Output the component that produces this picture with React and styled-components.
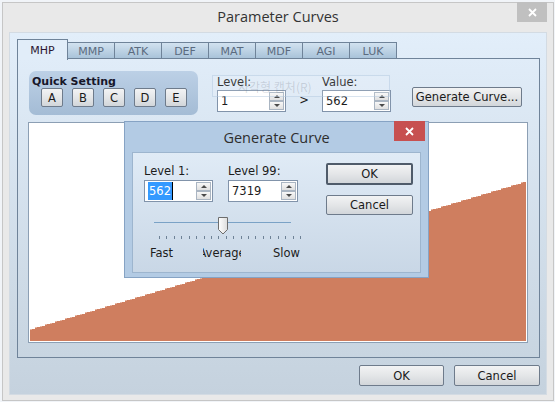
import React from "react";
import styled, { createGlobalStyle } from "styled-components";

const GlobalStyle = createGlobalStyle`
  html, body { margin: 0; padding: 0; }
  body {
    width: 555px;
    height: 402px;
    overflow: hidden;
    background: #f1f4f8;
    font-family: "DejaVu Sans", Verdana, sans-serif;
    font-size: 11.5px;
    color: #1c1c1c;
  }
`;

const Window = styled.div`
  position: relative;
  box-sizing: border-box;
  margin: 2px 0 0 2px;
  width: 552px;
  height: 399px;
  background: #e9e9e9;
  border: 1px solid #c6c6c6;
  padding: 0 6px 5px 6px;
  display: flex;
  flex-direction: column;
`;

const TitleBar = styled.div`
  height: 29px;
  display: grid;
  grid-template-columns: 1fr auto 1fr;
  align-items: start;
`;

const Title = styled.div`
  grid-column: 2;
  font-family: "Open Sans", "Noto Sans", sans-serif;
  font-size: 14.5px;
  line-height: 28px;
  color: #333;
`;

const CloseButton = styled.div`
  grid-column: 3;
  justify-self: end;
  width: ${(p) => p.$w}px;
  height: ${(p) => p.$h}px;
  margin-top: -1px;
  margin-right: ${(p) => p.$mr || 0}px;
  background: ${(p) => p.$bg};
  display: flex;
  align-items: center;
  justify-content: center;
`;

const Client = styled.div`
  flex: 1;
  display: flex;
  flex-direction: column;
  border: 1px solid #d3dbe3;
  background: linear-gradient(#e2eefa, #c5d2de);
  padding: 6px 6px 7px 7px;
`;

const TabRow = styled.div`
  height: 20px;
  display: flex;
  align-items: flex-end;
  position: relative;
  z-index: 1;
`;

const Tab = styled.div`
  box-sizing: border-box;
  width: ${(p) => (p.$active ? 51 : 48)}px;
  height: ${(p) => (p.$active ? 21 : 17)}px;
  margin-bottom: ${(p) => (p.$active ? -1 : 0)}px;
  margin-left: ${(p) => (p.$first ? 0 : -1)}px;
  border: 1px solid #6f8399;
  border-bottom: ${(p) => (p.$active ? "none" : "1px solid #6f8399")};
  background: ${(p) =>
    p.$active ? "#e1edf9" : "linear-gradient(#d2e2f0, #a9c3d9)"};
  color: ${(p) => (p.$active ? "#2a1532" : "#5b6b7f")};
  font-size: 11px;
  display: flex;
  align-items: center;
  justify-content: center;
  padding-top: ${(p) => (p.$active ? 1 : 2)}px;
  position: relative;
  z-index: ${(p) => (p.$active ? 2 : 1)};
`;

const Panel = styled.div`
  height: 300px;
  box-sizing: border-box;
  border: 1px solid #6f8399;
  margin-top: -1px;
  padding: 12px 11px 14px 10px;
  display: flex;
  flex-direction: column;
`;

const TopRow = styled.div`
  display: flex;
  align-items: flex-start;
  height: 44px;
`;

const QuickBox = styled.div`
  box-sizing: border-box;
  width: 169px;
  height: 44px;
  margin-left: 1px;
  border-radius: 7px;
  background: linear-gradient(#bcd0e6, #a4bcd5);
  padding: 4px 0 0 3px;
`;

const QuickLabel = styled.div`
  font-weight: bold;
  font-size: 11px;
  line-height: 13px;
  color: #16162a;
  height: 13px;
  overflow: hidden;
`;

const LetterRow = styled.div`
  display: flex;
  gap: 9px;
  padding-left: 9px;
`;

const Button = styled.button`
  box-sizing: border-box;
  width: ${(p) => p.$w}px;
  height: ${(p) => p.$h}px;
  margin: 0;
  padding: 0;
  font-family: inherit;
  font-size: 11.5px;
  color: #1a1a1a;
  background: linear-gradient(#f2f3f4, #e4e6e8 50%, #d2d6da);
  border: ${(p) => (p.$default ? "2px solid #4f5b6a" : "1px solid #6e7b8b")};
  border-radius: 2px;
  display: flex;
  align-items: center;
  justify-content: center;
  flex-shrink: 0;
`;

const Field = styled.div`
  display: flex;
  flex-direction: column;
  gap: ${(p) => p.$gap}px;
`;

const FieldLabel = styled.div`
  line-height: 14px;
  height: 14px;
`;

const SpinBox = styled.div`
  box-sizing: border-box;
  width: ${(p) => p.$w || 69}px;
  height: 22px;
  background: #fff;
  border: 1px solid #8193aa;
  padding: 0 1px 0 3px;
  display: flex;
  align-items: center;
`;

const SpinText = styled.div`
  flex: 1;
  display: flex;
  align-items: center;
  height: 18px;
`;

const Selected = styled.span`
  background: #3399ff;
  color: #fff;
  line-height: 18px;
  padding: 0 1px;
  border-right: 1px solid #000;
`;

const SpinArrows = styled.div`
  display: flex;
  flex-direction: column;
  width: 15px;
`;

const SpinArrow = styled.div`
  box-sizing: border-box;
  height: 9px;
  border: 1px solid #aab5c2;
  background: linear-gradient(#f7f7f7, #e0e0e0);
  display: flex;
  align-items: center;
  justify-content: center;
  &::after {
    content: "";
    border-left: 3px solid transparent;
    border-right: 3px solid transparent;
    ${(p) =>
      p.$down ? "border-top: 3px solid #4a4a4a;" : "border-bottom: 3px solid #4a4a4a;"}
  }
`;

const Gt = styled.div`
  width: 36px;
  text-align: center;
  margin-top: 22px;
  line-height: 14px;
`;

const Chart = styled.div`
  box-sizing: border-box;
  width: 500px;
  height: 221px;
  margin-top: 7px;
  border: 1px solid #8c9fb4;
  background: #fff;
  padding: 1px;
  display: flex;
`;

const BottomRow = styled.div`
  display: flex;
  justify-content: flex-end;
  gap: 10px;
  margin-top: 7px;
`;

const Ghost = styled.div`
  position: absolute;
  left: 209px;
  top: 72px;
  width: 178px;
  height: 22px;
  box-sizing: border-box;
  border: 1px solid rgba(170, 195, 220, 0.45);
  background: rgba(255, 255, 255, 0.12);
  display: flex;
  align-items: center;
  padding-left: 25px;
  font-family: "Noto Sans CJK KR", sans-serif;
  font-size: 12px;
  color: rgba(90, 100, 115, 0.22);
`;

const Dialog = styled.div`
  position: absolute;
  left: 121px;
  top: 118px;
  width: 305px;
  height: 157px;
  box-sizing: border-box;
  background: #b3cbe4;
  border: 1px solid #86a3c4;
  padding: 0 7px 4px 7px;
  display: flex;
  flex-direction: column;
  z-index: 5;
`;

const DialogTitleBar = styled(TitleBar)`
  height: 30px;
`;

const DialogTitle = styled(Title)`
  line-height: 31px;
  color: #2e2e2e;
`;

const DialogClient = styled.div`
  flex: 1;
  border: 1px solid #9db5ce;
  background: linear-gradient(#e0ebf6, #c9d7e6);
  padding: 10px 7px 0 11px;
  display: grid;
  grid-template-columns: 182px 87px;
`;

const LeftCol = styled.div`
  display: flex;
  flex-direction: column;
`;

const FieldRow = styled.div`
  display: flex;
  gap: 15px;
  padding-top: 1px;
`;

const SliderArt = styled.svg`
  display: block;
  margin: 12px 0 0 6px;
`;

const SliderLabels = styled.div`
  display: flex;
  margin: 6px 0 0 6px;
  line-height: 14px;
`;

const SliderLabel = styled.div`
  width: ${(p) => p.$w}px;
  margin-left: ${(p) => p.$ml || 0}px;
  display: flex;
  justify-content: ${(p) => (p.$center ? "center" : "flex-start")};
  overflow: hidden;
  white-space: nowrap;
  flex-shrink: 0;
`;

const RightCol = styled.div`
  display: flex;
  flex-direction: column;
  gap: 10px;
`;

const XMark = ({ size = 9 }) => (
  <svg width={size} height={size} viewBox="0 0 9 9">
    <path d="M1 1 L8 8 M8 1 L1 8" stroke="#fff" strokeWidth="1.8" />
  </svg>
);

const Spinner = ({ value, selected, w }) => (
  <SpinBox $w={w}>
    <SpinText>{selected ? <Selected>{value}</Selected> : value}</SpinText>
    <SpinArrows>
      <SpinArrow />
      <SpinArrow $down />
    </SpinArrows>
  </SpinBox>
);

const Curve = ({ from, to, max }) => {
  const W = 496;
  const H = 217;
  const n = 99;
  const step = W / n;
  let d = `M0 ${H}`;
  let tops = "";
  for (let i = 0; i < n; i++) {
    const v = from + ((to - from) * i) / (n - 1);
    const y = Math.round(H - (v / max) * H);
    const x0 = Math.round(i * step);
    const x1 = Math.round((i + 1) * step);
    d += ` L${x0} ${y} L${x1} ${y}`;
    tops += `M${x0} ${y + 0.5} h2 `;
  }
  d += ` L${W} ${H} Z`;
  return (
    <svg width={W} height={H} shapeRendering="crispEdges">
      <path d={d} fill="#cf7e5f" />
      <path d={tops} stroke="#e6b6a3" strokeWidth="1" fill="none" />
    </svg>
  );
};

const Slider = () => {
  const ticks = [];
  for (let i = 0; i < 20; i++) {
    const x = Math.round(9 + (i * 141) / 19) + 0.5;
    ticks.push(<line key={i} x1={x} y1="22" x2={x} y2="25" stroke="#6e8296" />);
  }
  return (
    <SliderArt width="152" height="26" viewBox="0 0 152 26">
      <defs>
        <linearGradient id="thumb" x1="0" y1="0" x2="1" y2="0">
          <stop offset="0" stopColor="#ffffff" />
          <stop offset="1" stopColor="#dcdcdc" />
        </linearGradient>
      </defs>
      <rect x="4" y="8" width="137" height="1" fill="#7aa2c6" />
      <path
        d="M68.5 3.5 h9 v12 l-4.5 4.5 l-4.5 -4.5 z"
        fill="url(#thumb)"
        stroke="#6d6d6d"
      />
      {ticks}
    </SliderArt>
  );
};

const tabs = ["MHP", "MMP", "ATK", "DEF", "MAT", "MDF", "AGI", "LUK"];

export default function App() {
  return (
    <>
      <GlobalStyle />
      <Window>
        <TitleBar>
          <Title>Parameter Curves</Title>
          <CloseButton $w={30} $h={20} $bg="#c0c0c0">
            <XMark />
          </CloseButton>
        </TitleBar>
        <Client>
          <TabRow>
            {tabs.map((t, i) => (
              <Tab key={t} $active={i === 0} $first={i === 0}>
                {t}
              </Tab>
            ))}
          </TabRow>
          <Panel>
            <TopRow>
              <QuickBox>
                <QuickLabel>Quick Setting</QuickLabel>
                <LetterRow>
                  {["A", "B", "C", "D", "E"].map((l) => (
                    <Button key={l} $w={22} $h={19}>
                      {l}
                    </Button>
                  ))}
                </LetterRow>
              </QuickBox>
              <Field $gap={1} style={{ marginLeft: 19, paddingTop: 4 }}>
                <FieldLabel>Level:</FieldLabel>
                <Spinner value="1" />
              </Field>
              <Gt>&gt;</Gt>
              <Field $gap={1} style={{ paddingTop: 4 }}>
                <FieldLabel>Value:</FieldLabel>
                <Spinner value="562" />
              </Field>
              <Button $w={110} $h={20} style={{ marginLeft: 21, marginTop: 16 }}>
                Generate Curve...
              </Button>
            </TopRow>
            <Chart>
              <Curve from={562} to={7319} max={9999} />
            </Chart>
          </Panel>
          <BottomRow>
            <Button $w={85} $h={21}>
              OK
            </Button>
            <Button $w={86} $h={21}>
              Cancel
            </Button>
          </BottomRow>
        </Client>

        <Ghost>사각형 캡처(R)</Ghost>

        <Dialog>
          <DialogTitleBar>
            <DialogTitle>Generate Curve</DialogTitle>
            <CloseButton $w={31} $h={20} $bg="#c75050" $mr={-4}>
              <XMark />
            </CloseButton>
          </DialogTitleBar>
          <DialogClient>
            <LeftCol>
              <FieldRow>
                <Field $gap={2}>
                  <FieldLabel>Level 1:</FieldLabel>
                  <Spinner value="562" selected />
                </Field>
                <Field $gap={2}>
                  <FieldLabel>Level 99:</FieldLabel>
                  <Spinner value="7319" w={70} />
                </Field>
              </FieldRow>
              <Slider />
              <SliderLabels>
                <SliderLabel $w={53}>Fast</SliderLabel>
                <SliderLabel $w={38} $center>
                  Average
                </SliderLabel>
                <SliderLabel $w={40} $ml={32}>
                  Slow
                </SliderLabel>
              </SliderLabels>
            </LeftCol>
            <RightCol>
              <Button $w={87} $h={22} $default>
                OK
              </Button>
              <Button $w={87} $h={20}>
                Cancel
              </Button>
            </RightCol>
          </DialogClient>
        </Dialog>
      </Window>
    </>
  );
}
